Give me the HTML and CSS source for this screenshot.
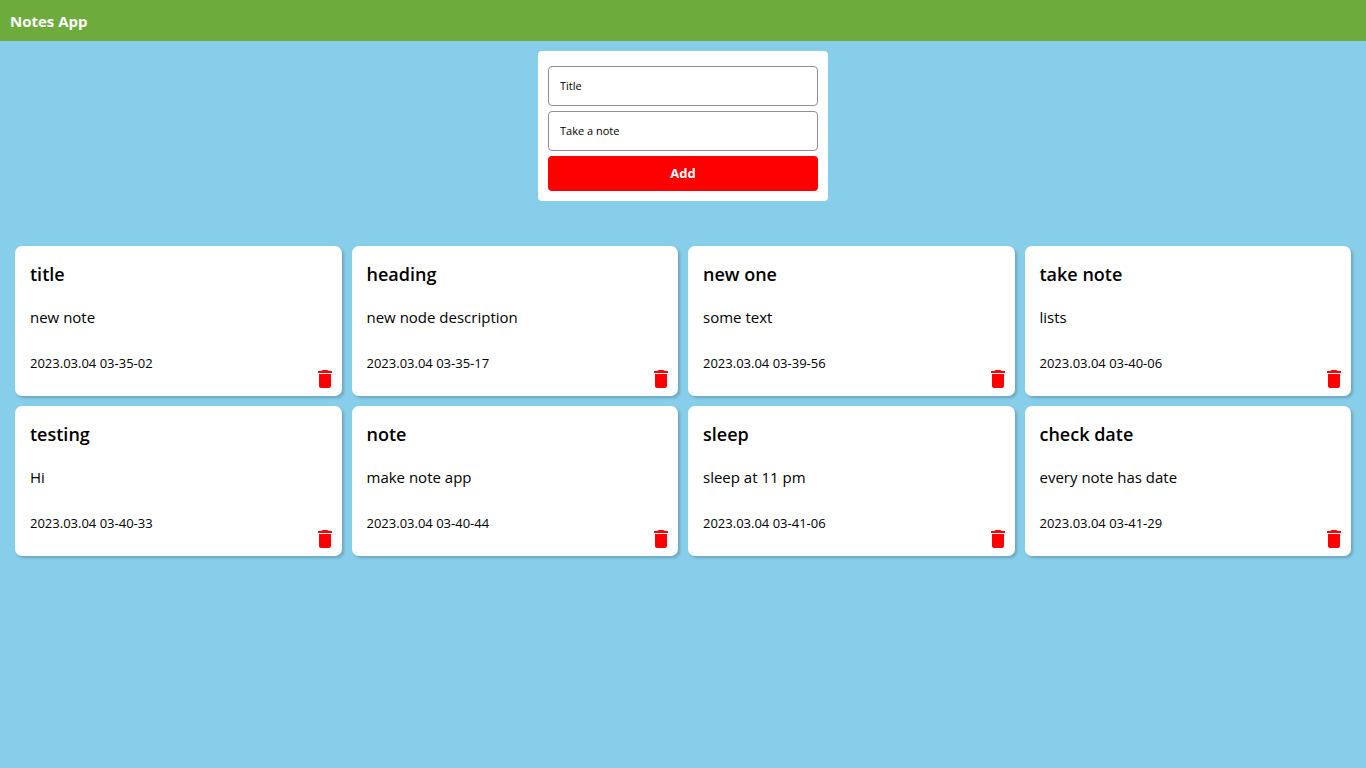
FILE: index.html
```html
<!DOCTYPE html>
<html lang="en">
<head>
<meta charset="utf-8">
<meta name="viewport" content="width=device-width, initial-scale=1">
<title>Notes App</title>
<link rel="stylesheet" href="styles.css">
</head>
<body>
<header class="navbar"><h1 class="brand">Notes App</h1></header>
<main>
<form class="note-form">
<input class="field" type="text" placeholder="Title" aria-label="Title">
<input class="field" type="text" placeholder="Take a note" aria-label="Take a note">
<button class="add" type="button">Add</button>
</form>
<section class="notes" id="notes" aria-label="Notes"></section>
</main>
<template id="note-template">
<article class="note">
<h2 class="note-title"></h2>
<p class="note-text"></p>
<time class="note-date"></time>
<button class="delete" type="button" aria-label="Delete note"><svg class="icon" viewBox="0 0 24 24" aria-hidden="true"><path d="M6 19c0 1.1.9 2 2 2h8c1.1 0 2-.9 2-2V7H6v12zM19 4h-3.5l-1-1h-5l-1 1H5v2h14V4z"/></svg></button>
</article>
</template>
<script src="notes.js"></script>
</body>
</html>
```
FILE: styles.css
```css
* {
  box-sizing: border-box;
  margin: 0;
  padding: 0;
}

body {
  min-height: 100vh;
  background: #87ceeb;
  color: #000;
  font-family: "Segoe UI", "Open Sans", "Noto Sans", sans-serif;
}

.navbar {
  padding: 11px 10px 9px;
  background: #6cab3c;
  color: #fff;
}

.brand {
  font-size: 15px;
  line-height: 21px;
  font-weight: 700;
}

.note-form {
  display: flex;
  flex-direction: column;
  gap: 5px;
  width: 290px;
  max-width: 100%;
  margin: 10px auto 0;
  padding: 15px 10px 10px;
  background: #fff;
  border-radius: 4px;
}

.field {
  height: 40px;
  padding: 0 11px 2px;
  border: 1px solid #8e8e9c;
  border-radius: 4px;
  font-family: inherit;
  font-size: 11px;
}

.field::placeholder {
  color: #000;
}

.add {
  height: 35px;
  padding-bottom: 2px;
  border: 0;
  border-radius: 4px;
  background: #f00;
  color: #fff;
  font-family: inherit;
  font-size: 13px;
  font-weight: 700;
}

.notes {
  display: grid;
  grid-template-columns: repeat(auto-fill, minmax(300px, 1fr));
  gap: 10px;
  padding: 45px 15px 15px;
}

.note {
  position: relative;
  min-height: 150px;
  padding: 15px;
  background: #fff;
  border-radius: 7px;
  box-shadow: 2px 2px 3px rgba(0, 0, 0, 0.2);
}

.note-title {
  font-size: 18px;
  line-height: 26px;
  font-weight: 600;
}

.note-text {
  margin-top: 20px;
  font-size: 15px;
  line-height: 21px;
}

.note-date {
  display: block;
  margin-top: 26px;
  font-size: 13px;
  line-height: 18px;
}

.delete {
  position: absolute;
  right: 5px;
  bottom: 5px;
  width: 24px;
  height: 24px;
  border: 0;
  background: none;
}

.icon {
  display: block;
  width: 24px;
  height: 24px;
  fill: #f00;
}
```
FILE: notes.js
```js
const notes = [
  ["title", "new note", "2023.03.04 03-35-02"],
  ["heading", "new node description", "2023.03.04 03-35-17"],
  ["new one", "some text", "2023.03.04 03-39-56"],
  ["take note", "lists", "2023.03.04 03-40-06"],
  ["testing", "Hi", "2023.03.04 03-40-33"],
  ["note", "make note app", "2023.03.04 03-40-44"],
  ["sleep", "sleep at 11 pm", "2023.03.04 03-41-06"],
  ["check date", "every note has date", "2023.03.04 03-41-29"]
];
const list = document.getElementById("notes");
const template = document.getElementById("note-template");

for (const [title, text, date] of notes) {
  const note = template.content.cloneNode(true);
  note.querySelector(".note-title").textContent = title;
  note.querySelector(".note-text").textContent = text;
  note.querySelector(".note-date").textContent = date;
  list.append(note);
}
```
